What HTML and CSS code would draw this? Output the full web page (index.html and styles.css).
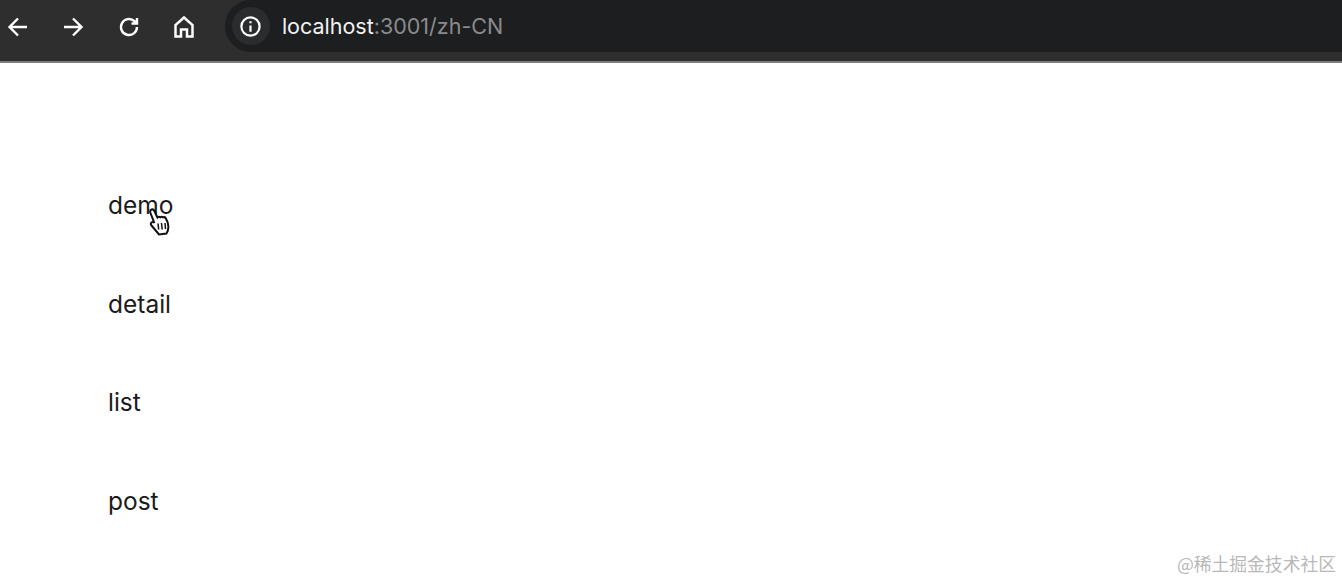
FILE: index.html
```html
<!DOCTYPE html>
<html lang="en">
<head>
  <meta charset="UTF-8" />
  <title>localhost</title>
  <link rel="stylesheet" href="styles.css">
</head>
<body>
  <header class="toolbar">
    <div class="nav-icons">
      <svg class="icon" viewBox="0 0 24 24"><path d="M21 12H4M12 3.500L3.500 12l8.500 8.500"/></svg>
      <svg class="icon" viewBox="0 0 24 24"><path d="M3 12h17M12 3.500l8.500 8.500-8.500 8.500"/></svg>
      <svg class="icon" viewBox="0 0 24 24"><path d="M20 12a8 8 0 1 1-2.500-5.800L20 8.500M20 3v5.500h-5.500"/></svg>
      <svg class="icon icon-home" viewBox="0 0 24 24"><path d="M12 2.500L3.500 10v11.500h5.500V14.500h6v7h5.500V10z"/></svg>
    </div>
    <div class="address-bar">
      <span class="site-info">
        <svg class="info-icon" viewBox="0 0 24 24">
          <circle cx="12" cy="12" r="9.500"/>
          <path d="M12 11v6.500M12 6.500v2"/>
        </svg>
      </span>
      <span class="url">localhost<span class="url-rest">:3001/zh-CN</span></span>
    </div>
  </header>

  <main class="content">
    <ul class="link-list">
      <li>demo</li>
      <li>detail</li>
      <li>list</li>
      <li>post</li>
    </ul>
  </main>

  <svg class="cursor" viewBox="0 0 24 28">
    <path d="M3.500 1.500c1.300-.4 2.400.4 2.900 1.500l3 6.500c.8-.8 2-.9 2.800-.2.800-.7 2-.7 2.800.1 1-.5 2.100-.2 2.700.7 1.600 2.500 2.700 5.800 2.700 9 0 2.500-.7 4.600-1.900 6.400L11 26.500 3.500 17.500c-.8-1-.8-2.200 0-2.900.8-.7 1.900-.6 2.800.2L2.500 5C2 3.500 2.400 1.900 3.500 1.500z"/>
    <path class="cursor-lines" d="M10 15.500l.7 6M13.500 15l.7 6.500M17 15l.5 6"/>
  </svg>

  <div class="watermark">@稀土掘金技术社区</div>
</body>
</html>
```

FILE: styles.css
```css
html, body {
  height: 100%;
}

body {
  margin: 0;
  background: white;
  font-family: Inter, 'Liberation Sans', sans-serif;
  overflow: hidden;
}

.toolbar {
  display: flex;
  align-items: flex-start;
  height: 61px;
  background: #2e2e2f;
  border-bottom: 2px solid #7d7d7d;
}

.nav-icons {
  display: flex;
  gap: 31.300px;
  padding: 15px 0 0 6px;
}

.icon {
  width: 24px;
  height: 24px;
  fill: none;
  stroke: white;
  stroke-width: 2.400;
}

.icon-home {
  stroke-width: 2.500;
}

.address-bar {
  display: flex;
  align-items: center;
  flex: 1;
  height: 52px;
  margin-left: 29px;
  padding-left: 7px;
  background: #1d1e20;
  border-top-left-radius: 26px;
  border-bottom-left-radius: 26px;
}

.site-info {
  display: flex;
  align-items: center;
  justify-content: center;
  width: 38px;
  height: 38px;
  border-radius: 50%;
  background: #2b2c2e;
}

.info-icon {
  width: 23px;
  height: 23px;
  fill: none;
  stroke: white;
  stroke-width: 2.300;
}

.url {
  margin-left: 12px;
  font-size: 21.500px;
  color: #f2f2f2;
}

.url-rest {
  color: #8b8b8d;
}

.content {
  padding: 127px 0 0 108px;
}

.link-list {
  list-style: none;
  margin: 0;
  padding: 0;
  display: flex;
  flex-direction: column;
  gap: 68.700px;
}

.link-list li {
  font-size: 24.500px;
  line-height: 30px;
  color: #1a1a1a;
}

.cursor {
  position: absolute;
  left: 148px;
  top: 208px;
  width: 24px;
  height: 28px;
  fill: white;
  stroke: #111;
  stroke-width: 2;
}

.cursor-lines {
  fill: none;
  stroke-width: 1.500;
}

.watermark {
  position: absolute;
  right: 6px;
  bottom: 4px;
  font-family: 'Noto Sans CJK SC', sans-serif;
  font-size: 17.800px;
  color: #b8b8b8;
}
```
